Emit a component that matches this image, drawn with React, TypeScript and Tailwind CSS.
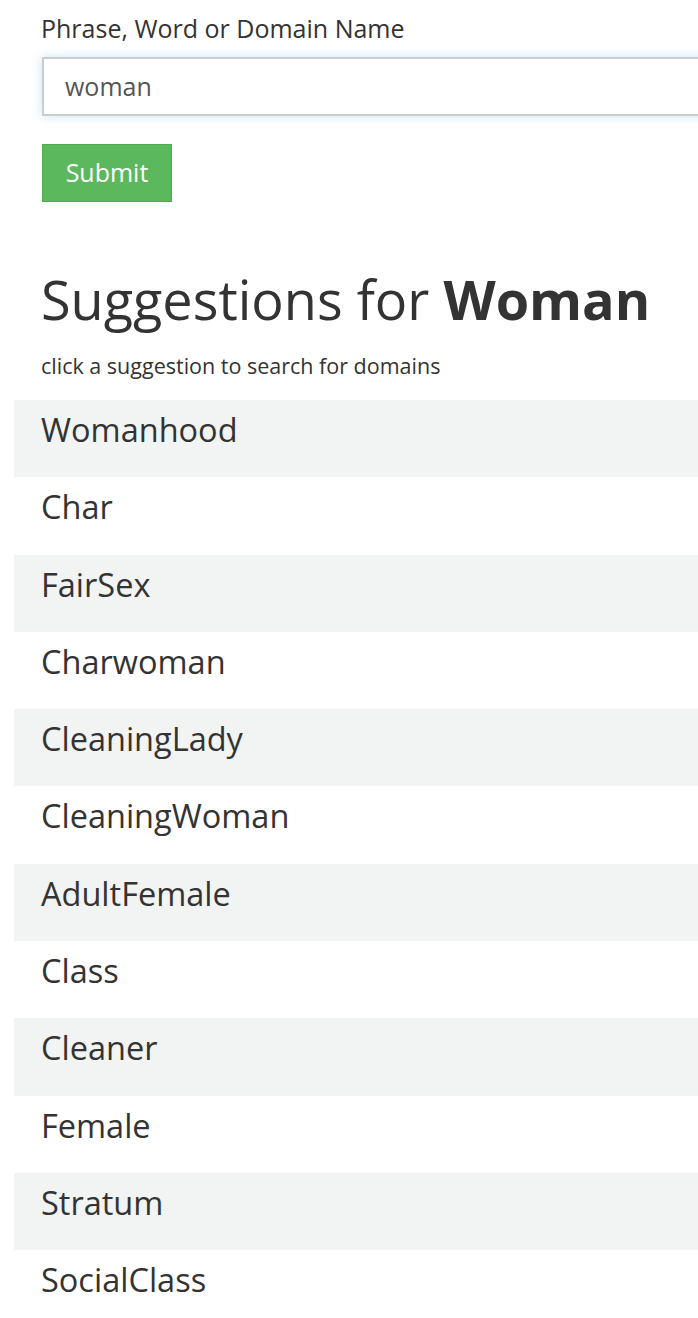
import React from 'react';

const suggestions = [
  'Womanhood',
  'Char',
  'FairSex',
  'Charwoman',
  'CleaningLady',
  'CleaningWoman',
  'AdultFemale',
  'Class',
  'Cleaner',
  'Female',
  'Stratum',
  'SocialClass',
];

export default function App() {
  return (
    <div className="w-[698px] h-[1318px] overflow-hidden bg-white text-[#333] font-['Open_Sans',sans-serif]">
      <div className="pl-[41px] pt-[12px]">
        <label className="block text-[25px] leading-[32px]">Phrase, Word or Domain Name</label>
        <div className="mt-[13px] ml-px h-[59px] w-[700px] border-2 border-[#ccc] bg-white pl-[21px] flex items-center text-[25px] text-[#555] shadow-[0_0_10px_rgba(102,175,233,0.35)]">
          woman
        </div>
        <button className="mt-[28px] ml-px h-[58px] w-[130px] bg-[#5cb85c] border border-[#4cae4c] text-white text-[25px]">
          Submit
        </button>
        <h1 className="mt-[66px] text-[54px] leading-[62px]">
          Suggestions for <span className="font-bold">Woman</span>
        </h1>
        <p className="mt-[23px] text-[21.5px] leading-[26px]">click a suggestion to search for domains</p>
      </div>
      <div className="mt-[21px] ml-[14px]">
        {suggestions.map((s, i) => (
          <div
            key={s}
            className={`h-[77.3px] pl-[27px] pt-[7px] text-[32.5px] leading-[46px] ${i % 2 === 0 ? 'bg-[#f2f3f3]' : 'bg-white'}`}
          >
            {s}
          </div>
        ))}
      </div>
    </div>
  );
}
